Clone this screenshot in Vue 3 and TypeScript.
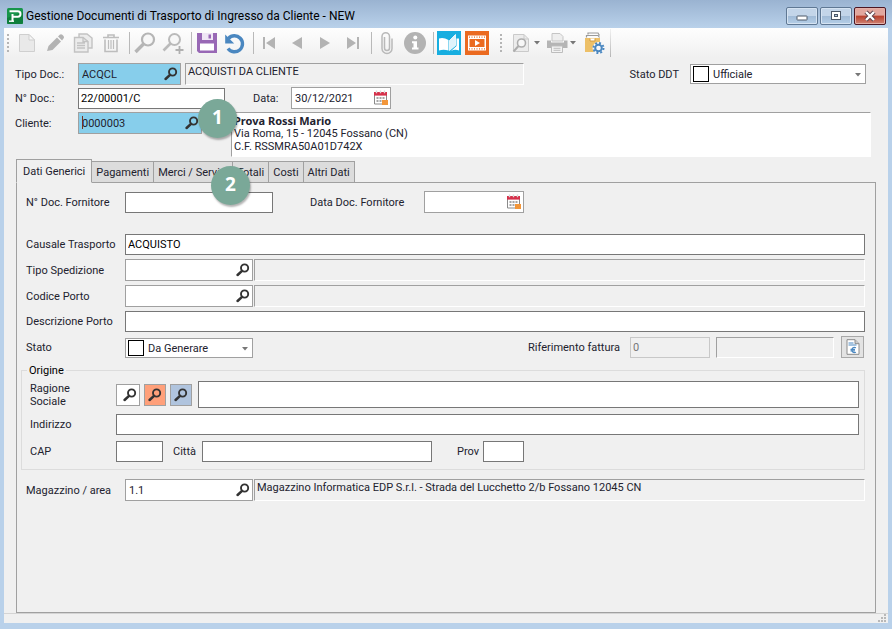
<script setup lang="ts">
import { ref } from 'vue'

const tabs = ['Dati Generici', 'Pagamenti', 'Merci / Servizi', 'Totali', 'Costi', 'Altri Dati']
const activeTab = ref(tabs[0])

const tipoDoc = ref('ACQCL')
const numeroDoc = ref('22/00001/C')
const data = ref('30/12/2021')
const cliente = ref('0000003')
const statoDdt = ref('Ufficiale')
const docFornitore = ref('')
const dataFornitore = ref('')
const causale = ref('ACQUISTO')
const tipoSpedizione = ref('')
const codicePorto = ref('')
const descrizionePorto = ref('')
const stato = ref('Da Generare')
const riferimento = ref('0')
const ragioneSociale = ref('')
const indirizzo = ref('')
const cap = ref('')
const citta = ref('')
const prov = ref('')
const magazzino = ref('1.1')
</script>

<template>
  <div class="window">
    <svg class="defs" aria-hidden="true">
      <symbol id="glass" viewBox="0 0 14 14">
        <circle cx="8.6" cy="5" r="3.6" fill="none" stroke="#333" stroke-width="1.9" />
        <path d="M6 7.8 1.6 12" stroke="#333" stroke-width="2.5" stroke-linecap="round" />
      </symbol>
      <symbol id="calendar" viewBox="0 0 16 16">
        <path d="M1.5 3v11h12V3" fill="#fff" stroke="#8a8a8a" />
        <path d="M1 2h13v3.6H1z" fill="#d6304a" />
        <path d="M3.5 0.6v2.6M7.5 .6v2.6M11.5 .6v2.6" stroke="#d9d9d9" stroke-width="1.4" />
        <path d="M3.5 8h8M3.5 11h5" stroke="#a5a5a5" stroke-width="2" stroke-dasharray="2 1" />
        <path d="M9 10h6v5H9z" fill="#f2963a" />
      </symbol>
      <symbol id="caret" viewBox="0 0 6 4">
        <path d="M0 0h6L3 3.6z" fill="#777" />
      </symbol>
    </svg>

    <header class="titlebar">
      <svg class="logo" viewBox="0 0 16 16" aria-hidden="true">
        <rect width="16" height="16" rx="1.5" fill="#17954a" />
        <path d="M0 10 16 4v10.500a1.500 1.500 0 0 1-1.500 1.500h-13A1.500 1.500 0 0 1 0 14.500z" fill="#0f7f3c" />
        <path d="M2.500 3.300h8.300a2.700 2.700 0 0 1 0 5.400H5.500v4.500M5.500 6v2" fill="none" stroke="#fff" stroke-width="2" />
        <path d="M2 13.200h5" stroke="#fff" stroke-width="1.400" />
      </svg>
      <h1>Gestione Documenti di Trasporto di Ingresso da Cliente - NEW</h1>
      <div class="winbtns">
        <button type="button" aria-label="Riduci a icona">
          <svg viewBox="0 0 12 12"><rect x="1" y="6" width="10" height="4" rx=".5" fill="#fff" stroke="#4c5868" /></svg>
        </button>
        <button type="button" aria-label="Ingrandisci">
          <svg viewBox="0 0 12 12"><rect x="1.500" y="1.500" width="9" height="8" fill="#fff" stroke="#4c5868" /><rect x="4.500" y="4.500" width="3" height="2" fill="#b4cce6" stroke="#4c5868" /></svg>
        </button>
        <button type="button" class="close" aria-label="Chiudi">
          <svg viewBox="0 0 12 12"><path d="m2 2 8 8M10 2 2 10" stroke="#5b4048" stroke-width="4.200" /><path d="m2 2 8 8M10 2 2 10" stroke="#fff" stroke-width="2.400" /></svg>
        </button>
      </div>
    </header>

    <main class="client">
      <nav class="toolbar" aria-label="Comandi">
        <i class="grip"></i>
        <button type="button" aria-label="Nuovo">
          <svg viewBox="0 0 24 24"><path d="M4.500 3.500h9.500l5.500 5.500v11.500h-15z" fill="#e9e9e9" stroke="#cfcfcf" /><path d="M14 3.500V9h5.500z" fill="#f6f6f6" stroke="#cfcfcf" /></svg>
        </button>
        <button type="button" aria-label="Modifica">
          <svg viewBox="0 0 24 24"><path d="m4 20 1.500-5L14 6.500l4 4L9.500 19z" fill="#b3b3b3" /><path d="m15 5.500 1.700-1.700q1.300-1.200 2.600 0l1.200 1.200q1.200 1.300 0 2.600L19 9.500z" fill="#b3b3b3" /></svg>
        </button>
        <button type="button" aria-label="Copia">
          <svg viewBox="0 0 24 24"><path d="M8 3h8l5 4v10H8z" fill="#ececec" stroke="#c2c2c2" stroke-width="1.400" /><path d="M3.500 6.500H12l5 4V21H3.500z" fill="#ececec" stroke="#c2c2c2" stroke-width="1.400" /><path d="M12 6.500v4h5M6 12h8M6 14.500h8M6 17h8" fill="none" stroke="#c2c2c2" stroke-width="1.300" /></svg>
        </button>
        <button type="button" aria-label="Elimina">
          <svg viewBox="0 0 24 24"><path d="M4 6.500h16M9 6V4h6v2M6 8.500v12h12v-12" fill="none" stroke="#bdbdbd" stroke-width="1.600" /><path d="M9.500 9v9M12 9v9M14.500 9v9" stroke="#bdbdbd" stroke-width="1.200" /></svg>
        </button>
        <i class="sep"></i>
        <button type="button" aria-label="Cerca">
          <svg viewBox="0 0 24 24"><circle cx="15" cy="8.500" r="6" fill="#f7f7f7" stroke="#b5b5b5" stroke-width="2.200" /><path d="m10.500 13-8 8" stroke="#b5b5b5" stroke-width="3.400" /></svg>
        </button>
        <button type="button" aria-label="Cerca altri">
          <svg viewBox="0 0 24 24"><circle cx="13.500" cy="8.500" r="5.500" fill="#f7f7f7" stroke="#bababa" stroke-width="2" /><path d="m9.500 12.500-7 7" stroke="#bababa" stroke-width="2.600" /><path d="M18.500 15v8M14.500 19h8" stroke="#b0b0b0" stroke-width="1.800" /></svg>
        </button>
        <i class="sep"></i>
        <button type="button" aria-label="Salva">
          <svg viewBox="0 0 24 24"><path d="M2 2h20v20H4l-2-2z" fill="#9868b5" /><path d="M7 2h11v7H7z" fill="#efe6f5" /><path d="M13.500 3.500H16v4h-2.500z" fill="#9868b5" /><path d="M5 12.500h14v7H5z" fill="#fff" /></svg>
        </button>
        <button type="button" aria-label="Annulla">
          <svg viewBox="0 0 24 24"><path d="M5.500 7.500A8 8 0 1 1 5 17.500" fill="none" stroke="#4a87c0" stroke-width="3.400" /><path d="M2.200 3.500v9h9z" fill="#4a87c0" /></svg>
        </button>
        <i class="sep"></i>
        <button type="button" aria-label="Primo">
          <svg viewBox="0 0 24 24"><path d="M6 6h2v12H6zM18 6v12L9 12z" fill="#b3b3b3" /></svg>
        </button>
        <button type="button" aria-label="Precedente">
          <svg viewBox="0 0 24 24"><path d="M17 6v12L7 12z" fill="#b3b3b3" /></svg>
        </button>
        <button type="button" aria-label="Successivo">
          <svg viewBox="0 0 24 24"><path d="M7 6v12l10-6z" fill="#b3b3b3" /></svg>
        </button>
        <button type="button" aria-label="Ultimo">
          <svg viewBox="0 0 24 24"><path d="M6 6v12l9-6zM16 6h2v12h-2z" fill="#b3b3b3" /></svg>
        </button>
        <i class="sep"></i>
        <button type="button" aria-label="Allegati">
          <svg viewBox="0 0 24 24"><path d="M14.500 7v10a2.500 2.500 0 0 1-5 0V8M9.500 15V6M17 7.500V17.500a5 5 0 0 1-10 0V5.500a3.700 3.700 0 0 1 7.500 0V10" fill="none" stroke="#b9b9b9" stroke-width="1.500" /></svg>
        </button>
        <button type="button" aria-label="Informazioni">
          <svg viewBox="0 0 24 24"><circle cx="12" cy="12" r="11" fill="#b3b3b3" /><circle cx="12.300" cy="6.500" r="2" fill="#fff" /><path d="M9 10.200h5v6.300h1.500v2H9v-2h1.500v-4.300H9z" fill="#fff" /></svg>
        </button>
        <i class="sep"></i>
        <button type="button" aria-label="Manuale">
          <svg viewBox="0 0 24 24"><path d="M0 0h24v24H0z" fill="#17aee0" /><path d="M2 7.500q4.500-1.500 9.500 1.500v10.500q-5-1.500-9.500 0z" fill="#fff" /><path d="M12.500 9.500 18.500 3.500v11l-6 5z" fill="#dff3fb" stroke="#fff" stroke-width=".800" /><path d="M19.500 7.500H22v12q-4-1.500-8 .500l5.500-5z" fill="#fff" /></svg>
        </button>
        <button type="button" aria-label="Video">
          <svg viewBox="0 0 24 24"><path d="M0 0h24v24H0z" fill="#eb6a20" /><path d="M3 4.500h18v15H3z" fill="#fff" /><path d="M4.500 8h15v8h-15z" fill="#eb6a20" /><path d="M10 9v6l5-3z" fill="#fff" /><path d="M4 6.200h16M4 17.800h16" stroke="#eb6a20" stroke-width="1.200" stroke-dasharray="1 1.500" /></svg>
        </button>
        <i class="grip second"></i>
        <button type="button" class="drop" aria-label="Anteprima">
          <svg viewBox="0 0 24 24"><path d="M3.500 3.500H14l4.500 4.500v12.500h-15z" fill="#ececec" stroke="#cacaca" /><path d="M14 3.500V8h4.500" fill="none" stroke="#cacaca" /><circle cx="11.500" cy="12" r="4" fill="#f7f7f7" stroke="#adadad" stroke-width="1.600" /><path d="m8.500 15-5 5.500" stroke="#adadad" stroke-width="2" /></svg>
          <svg class="tiny"><use href="#caret" /></svg>
        </button>
        <button type="button" class="drop" aria-label="Stampa">
          <svg viewBox="0 0 24 24"><path d="M6 2.500h8l3 3V10H6z" fill="#eee" stroke="#c5c5c5" /><path d="M1 9.500h4v2h13v-2h3.500V17H1z" fill="#b5b5b5" /><path d="M5.500 15h11v6.500h-11z" fill="#f3f3f3" stroke="#bdbdbd" /><path d="M7.500 17.300h7M7.500 19.300h7" stroke="#bdbdbd" /></svg>
          <svg class="tiny"><use href="#caret" /></svg>
        </button>
        <button type="button" class="archive" aria-label="Archivio">
          <svg viewBox="0 0 24 24"><path d="M5 3.500v-1.500h10l1.500 2.500M3.500 6.500v-2h11.500l1.500 2" fill="none" stroke="#9a9a9a" stroke-width="1.200" /><path d="M2 7h15v14H2z" fill="#edc068" /><path d="M7 7.500v2.500h5V7.500" fill="#fff" stroke="#d39c3f" /><circle cx="15.500" cy="17" r="6" fill="#f7f7f7" /><circle cx="15.500" cy="17" r="3.300" fill="none" stroke="#4a87c0" stroke-width="2" /><circle cx="15.500" cy="17" r="5" fill="none" stroke="#4a87c0" stroke-width="2" stroke-dasharray="1.960 1.960" /></svg>
        </button>
        <i class="edge"></i>
      </nav>

      <form class="head" @submit.prevent>
        <div class="row">
          <label class="lbl" for="tipo-doc">Tipo Doc.:</label>
          <div class="lookup sky w-tipo">
            <input id="tipo-doc" v-model="tipoDoc" type="text" />
            <button type="button" aria-label="Cerca tipo documento"><svg class="glass"><use href="#glass" /></svg></button>
          </div>
          <output class="sunken w-desc">ACQUISTI DA CLIENTE</output>
          <label class="push" for="stato-ddt">Stato DDT</label>
          <div class="combo w-ddt">
            <span class="swatch"></span>
            <select id="stato-ddt" v-model="statoDdt"><option>Ufficiale</option></select>
            <svg class="arrow"><use href="#caret" /></svg>
          </div>
        </div>
        <div class="row">
          <label class="lbl" for="num-doc">N° Doc.:</label>
          <input id="num-doc" v-model="numeroDoc" class="box w-num" type="text" />
          <label class="lbl-data" for="data-doc">Data:</label>
          <div class="lookup date">
            <input id="data-doc" v-model="data" type="text" />
            <button type="button" aria-label="Apri calendario"><svg class="cal"><use href="#calendar" /></svg></button>
          </div>
        </div>
        <div class="row customer">
          <label class="lbl" for="cliente">Cliente:</label>
          <div class="lookup sky w-cliente">
            <input id="cliente" v-model="cliente" type="text" />
            <i class="cursor"></i>
            <button type="button" aria-label="Cerca cliente"><svg class="glass"><use href="#glass" /></svg></button>
            <span class="badge first">1</span>
          </div>
          <address class="card">
            <strong>Prova Rossi Mario</strong>
            <span>Via Roma, 15 - 12045 Fossano (CN)</span>
            <span>C.F. RSSMRA50A01D742X</span>
          </address>
        </div>
      </form>

      <section class="tabbed">
        <div class="tabs" role="tablist">
          <button
            v-for="tab in tabs"
            :key="tab"
            type="button"
            role="tab"
            :aria-selected="tab === activeTab"
            :class="{ active: tab === activeTab }"
            @click="activeTab = tab"
          >{{ tab }}</button>
          <span class="badge second">2</span>
        </div>

        <form class="panel" @submit.prevent>
          <div class="row supplier">
            <label class="lbl" for="doc-forn">N° Doc. Fornitore</label>
            <input id="doc-forn" v-model="docFornitore" class="box w-forn" type="text" />
            <label class="lbl-forn" for="data-forn">Data Doc. Fornitore</label>
            <div class="lookup date">
              <input id="data-forn" v-model="dataFornitore" type="text" />
              <button type="button" aria-label="Apri calendario"><svg class="cal"><use href="#calendar" /></svg></button>
            </div>
          </div>
          <div class="row">
            <label class="lbl" for="causale">Causale Trasporto</label>
            <input id="causale" v-model="causale" class="box grow" type="text" />
          </div>
          <div class="row">
            <label class="lbl" for="tipo-sped">Tipo Spedizione</label>
            <div class="lookup w-look">
              <input id="tipo-sped" v-model="tipoSpedizione" type="text" />
              <button type="button" aria-label="Cerca tipo spedizione"><svg class="glass"><use href="#glass" /></svg></button>
            </div>
            <output class="sunken grow"></output>
          </div>
          <div class="row">
            <label class="lbl" for="porto">Codice Porto</label>
            <div class="lookup w-look">
              <input id="porto" v-model="codicePorto" type="text" />
              <button type="button" aria-label="Cerca porto"><svg class="glass"><use href="#glass" /></svg></button>
            </div>
            <output class="sunken grow"></output>
          </div>
          <div class="row">
            <label class="lbl" for="desc-porto">Descrizione Porto</label>
            <input id="desc-porto" v-model="descrizionePorto" class="box grow" type="text" />
          </div>
          <div class="row low">
            <label class="lbl" for="stato">Stato</label>
            <div class="combo w-look">
              <span class="swatch"></span>
              <select id="stato" v-model="stato"><option>Da Generare</option></select>
              <svg class="arrow"><use href="#caret" /></svg>
            </div>
            <label class="push" for="rif">Riferimento fattura</label>
            <input id="rif" v-model="riferimento" class="box off" type="text" disabled />
            <output class="sunken w-rif"></output>
            <button type="button" class="invoice" aria-label="Apri fattura">
              <svg viewBox="0 0 14 16"><path d="M1 .700h8l4 4v10.600H1z" fill="#fff" stroke="#8a8a8a" /><path d="M9 .700v4h4" fill="#ccc" stroke="#8a8a8a" /><path d="M2.500 4h5M2.500 6h8" stroke="#4a87c0" /><path d="M10 8.800q-4-1.300-4 2.200t4 2.200M4.500 10.300H9M4.500 11.900H9" fill="none" stroke="#4a87c0" stroke-width="1.200" /></svg>
            </button>
          </div>

          <fieldset>
            <legend>Origine</legend>
            <div class="row">
              <label class="lbl two" for="ragione">Ragione Sociale</label>
              <div class="picks">
                <button type="button" class="wide" aria-label="Cerca cliente"><svg class="glass"><use href="#glass" /></svg></button>
                <button type="button" class="salmon" aria-label="Cerca fornitore"><svg class="glass"><use href="#glass" /></svg></button>
                <button type="button" class="steel" aria-label="Cerca contatto"><svg class="glass"><use href="#glass" /></svg></button>
              </div>
              <input id="ragione" v-model="ragioneSociale" class="box grow tall" type="text" />
            </div>
            <div class="row">
              <label class="lbl" for="indirizzo">Indirizzo</label>
              <input id="indirizzo" v-model="indirizzo" class="box grow" type="text" />
            </div>
            <div class="row">
              <label class="lbl" for="cap">CAP</label>
              <input id="cap" v-model="cap" class="box w-cap" type="text" />
              <label class="lbl-citta" for="citta">Città</label>
              <input id="citta" v-model="citta" class="box w-citta" type="text" />
              <label class="lbl-prov" for="prov">Prov</label>
              <input id="prov" v-model="prov" class="box w-prov" type="text" />
            </div>
          </fieldset>

          <div class="row">
            <label class="lbl" for="magazzino">Magazzino / area</label>
            <div class="lookup w-look">
              <input id="magazzino" v-model="magazzino" type="text" />
              <button type="button" aria-label="Cerca magazzino"><svg class="glass"><use href="#glass" /></svg></button>
            </div>
            <output class="sunken grow">Magazzino Informatica EDP S.r.l. - Strada del Lucchetto 2/b Fossano 12045 CN</output>
          </div>
        </form>
      </section>

      <footer class="status">
        <svg viewBox="0 0 8 8" aria-hidden="true"><path d="M6 0h2v2H6zM3 3h2v2H3zM6 3h2v2H6zM0 6h2v2H0zM3 6h2v2H3zM6 6h2v2H6z" fill="#b8b8b8" /></svg>
      </footer>
    </main>
  </div>
</template>

<style>
body {
  margin: 0;
}
</style>

<style scoped>
.window {
  box-sizing: border-box;
  display: flex;
  flex-direction: column;
  min-height: 100vh;
  padding: 0 4px 6px;
  background: linear-gradient(#9ab3d1, #b9d1ea 28px);
  color: #22222e;
  font: 11px/13px Roboto, "Noto Sans", sans-serif;
}
.window *,
.window *::before {
  box-sizing: border-box;
}
.defs {
  position: absolute;
  width: 0;
  height: 0;
}
button,
input,
select {
  margin: 0;
  border: 0;
  border-radius: 0;
  padding: 0;
  background: none;
  color: inherit;
  font: inherit;
}
input {
  min-width: 0;
  outline: 0;
}
button {
  display: flex;
  align-items: center;
  justify-content: center;
}

.titlebar {
  display: flex;
  align-items: center;
  height: 28px;
  padding: 4px 2px 0 3px;
}
.logo {
  width: 16px;
  height: 16px;
}
h1 {
  flex: 1;
  margin: 0 0 0 3px;
  color: #000;
  font-size: 12px;
  font-weight: 400;
  line-height: 16px;
}
.winbtns {
  display: flex;
  gap: 2px;
}
.winbtns button {
  width: 32px;
  height: 18px;
  border: 1px solid #5f7894;
  border-radius: 2px;
  background: linear-gradient(#c3d5e9 50%, #a0bad6 50%, #b5cfe8);
  box-shadow: inset 0 0 0 1px #d5e3f2;
}
.winbtns .close {
  border-color: #4d1622;
  background: linear-gradient(#e2a79e 45%, #b93f2b 50%, #cf8375);
  box-shadow: inset 0 0 0 1px #e4b0a8;
}
.winbtns svg {
  width: 12px;
  height: 12px;
}

.client {
  flex: 1;
  display: flex;
  flex-direction: column;
  background: #f0f0f0;
}
.toolbar {
  display: flex;
  align-items: center;
  height: 30px;
  padding-left: 3px;
  background: linear-gradient(#fefefe, #f0f0f0);
}
.toolbar button {
  width: 28px;
  height: 28px;
}
.toolbar svg {
  flex: none;
  width: 24px;
  height: 24px;
}
.toolbar .drop {
  justify-content: flex-start;
  width: 36px;
  padding-left: 2px;
}
.toolbar .tiny {
  width: 6px;
  height: 4px;
}
.toolbar .archive {
  width: 30px;
}
.grip {
  width: 2px;
  height: 18px;
  margin-right: 4px;
  background: repeating-linear-gradient(#b5b5b5 0 2px, transparent 2px 4px);
}
.grip.second {
  margin: 0 6px 0 9px;
}
.sep {
  width: 6px;
  height: 22px;
  background: linear-gradient(#b9b9b9, #b9b9b9) 4px 0 / 1px 100% no-repeat;
}
.edge {
  width: 1px;
  height: 28px;
  background: linear-gradient(#f2f2f2, #b5b5b5);
}

.row {
  display: flex;
  align-items: center;
}
.head {
  display: flex;
  flex-direction: column;
  gap: 2px;
  padding: 5px 17px 2px 11px;
}
.head .lbl {
  width: 63px;
}
.lbl {
  flex: none;
}
.push {
  margin-left: auto;
}
.grow {
  flex: 1;
}

.box {
  height: 21px;
  border: 1px solid #777;
  padding: 0 2px;
  background: #fff;
  color: #000;
}
.lookup {
  position: relative;
  display: flex;
  flex: none;
  height: 22px;
  border: 1px solid #a0a0a0;
  background: #fff;
}
.lookup input {
  flex: 1;
  padding: 0 0 0 3px;
}
.lookup button {
  width: 18px;
}
.sky {
  background: #87ceeb;
}
.glass {
  width: 14px;
  height: 14px;
}
.cal {
  width: 16px;
  height: 16px;
}
.date {
  width: 100px;
}
.sunken {
  display: block;
  height: 22px;
  border: 1px solid;
  border-color: #a0a0a0 #fff #fff #a0a0a0;
  padding: 1px 2px;
}
.combo {
  position: relative;
  display: flex;
  height: 20px;
  border: 1px solid #a0a0a0;
  background: #fff;
}
.combo select {
  flex: 1;
  appearance: none;
  padding: 0 12px 0 22px;
}
.swatch {
  position: absolute;
  top: 1px;
  left: 2px;
  width: 16px;
  height: 16px;
  border: 1px solid #000;
}
.arrow {
  position: absolute;
  top: 8px;
  right: 4px;
  width: 6px;
  height: 4px;
  pointer-events: none;
}

.w-tipo {
  width: 103px;
}
.w-desc {
  width: 339px;
  margin-left: 4px;
}
.w-ddt {
  width: 176px;
  margin: 0 5px 0 11px;
}
.w-num {
  width: 147px;
}
.lbl-data {
  width: 38px;
  margin-left: 28px;
}
.w-cliente {
  width: 124px;
}
.customer {
  align-items: flex-start;
  padding-top: 1px;
}
.customer .lbl {
  line-height: 24px;
}
.cursor {
  position: absolute;
  top: 3px;
  left: 3px;
  width: 1px;
  height: 13px;
  background: #7a3020;
}
.card {
  flex: 1;
  display: flex;
  flex-direction: column;
  height: 45px;
  margin-left: 29px;
  border: 1px solid;
  border-color: #a0a0a0 #fff #fff #a0a0a0;
  padding: 1px 2px;
  background: #fff;
  font-style: normal;
}
.card strong {
  font-family: "Noto Sans", sans-serif;
}

.badge {
  position: absolute;
  z-index: 2;
  width: 39px;
  height: 39px;
  border-radius: 50%;
  background: #7aa898;
  box-shadow: 1px 2px 2px rgb(0 0 0 / 30%);
  color: #fff;
  font: bold 19px/37px "Open Sans", "Noto Sans", sans-serif;
  text-align: center;
}
.badge.first {
  top: -14px;
  left: 119px;
}
.badge.second {
  top: 7px;
  left: 195px;
}

.tabbed {
  flex: 1;
  display: flex;
  flex-direction: column;
  padding: 0 12px;
}
.tabs {
  position: relative;
  display: flex;
  align-items: flex-end;
  height: 24px;
}
.tabs button {
  height: 22px;
  margin-left: -1px;
  border: 1px solid #a0a0a0;
  padding: 0 4px;
  background: #dcdcdc;
  white-space: nowrap;
}
.tabs .active {
  z-index: 1;
  height: 24px;
  margin-left: 0;
  border-bottom-color: #f0f0f0;
  padding: 0 6px;
  background: #f0f0f0;
}
.panel {
  flex: 1;
  display: flex;
  flex-direction: column;
  gap: 4px;
  margin-top: -1px;
  border: 1px solid #a0a0a0;
  padding: 8px 10px 8px 9px;
}
.panel .lbl {
  width: 99px;
}
.supplier {
  margin-bottom: 17px;
}
.w-forn {
  width: 148px;
}
.lbl-forn {
  width: 114px;
  margin-left: 37px;
}
.w-look {
  width: 128px;
}
.w-look + .sunken {
  margin-left: 1px;
}
.low {
  align-items: flex-end;
  line-height: 20px;
}
.off {
  width: 80px;
  margin-left: 10px;
  border-color: #c8c8c8;
  background: #f0f0f0;
  color: #777;
}
.w-rif {
  width: 118px;
  height: 21px;
  margin: 0 7px 0 6px;
}
.invoice {
  width: 23px;
  height: 22px;
  margin-right: 1px;
  border: 1px solid #a8a8a8;
  background: #e3e3e3;
}
.invoice svg {
  width: 14px;
  height: 16px;
}

fieldset {
  display: flex;
  flex-direction: column;
  gap: 6px;
  min-width: 0;
  margin: 2px 0 5px -5px;
  border: 1px solid #dcdcdc;
  padding: 4px 5px 7px 8px;
}
legend {
  margin-left: -3px;
  padding: 0 2px;
  color: #000;
}
.panel fieldset .lbl {
  width: 86px;
}
.panel fieldset .two {
  padding-right: 30px;
}
.picks {
  display: flex;
  gap: 4px;
  margin-right: 6px;
}
.picks button {
  width: 22px;
  height: 22px;
  border: 1px solid #a0a0a0;
  background: #fff;
}
.picks .wide {
  width: 24px;
  padding-left: 4px;
}
.picks .salmon {
  background: #ffa07a;
}
.picks .steel {
  background: #b0c4de;
}
.tall {
  height: 27px;
}
.w-cap {
  width: 47px;
}
.lbl-citta {
  width: 29px;
  margin-left: 10px;
}
.w-citta {
  width: 230px;
}
.lbl-prov {
  width: 26px;
  margin-left: 25px;
}
.w-prov {
  width: 41px;
}

.status {
  display: flex;
  align-items: flex-end;
  justify-content: flex-end;
  height: 10px;
  border-top: 1px solid #d4d4d4;
  padding: 0 2px 1px;
}
.status svg {
  width: 8px;
  height: 8px;
}
</style>
